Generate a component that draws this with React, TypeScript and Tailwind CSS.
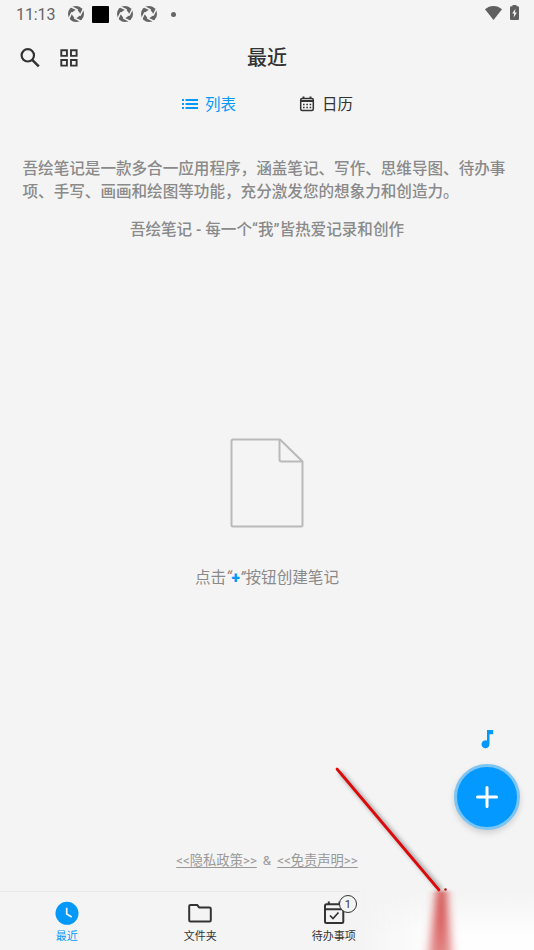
import type { ReactNode } from "react";

const ApertureIcon = () => (
    <svg className="w-4 h-4" viewBox="0 0 16 16">
        <circle cx="8" cy="8" r="8" fill="#636363" />
        <path d="M8.800 3 13 8.800 7.200 13 3 7.200Z" fill="#f4f4f4" />
        <path
            d="M9 3.600 4 1.200M12.400 9 14.800 4M7 12.400 12 14.800M3.600 7 1.200 12"
            stroke="#f4f4f4"
            strokeWidth="1.500"
            strokeLinecap="square"
            fill="none"
        />
    </svg>
);

function StatusBar() {
    return (
        <div className="h-7 shrink-0 flex items-center pl-4 pr-[15px] text-[#666]">
            <span className="w-[52px] pt-px text-base leading-4 tracking-[-0.1px]">11:13</span>
            <div className="flex items-center pt-px -mt-px">
                <ApertureIcon />
                <div className="ml-2 mr-2 w-[17px] h-[17px] rounded-[1px] bg-black" />
                <ApertureIcon />
                <div className="w-2" />
                <ApertureIcon />
                <div className="ml-[14px] w-[5px] h-[5px] rounded-full bg-[#666]" />
            </div>
            <div className="ml-auto -mt-[3px] flex items-center gap-2">
                <svg className="w-[17px] h-[14px]" viewBox="0 0 17 14" fill="#5f5f5f">
                    <path d="M8.500 14 0 3.300C2.400 1.200 5.300 0 8.500 0S14.600 1.200 17 3.300Z" />
                </svg>
                <svg className="w-[9px] h-[15px]" viewBox="0 0 9 15">
                    <path d="M2.500 1.300V0h4v1.300h1.300Q9 1.300 9 2.500V14q0 1-1 1H1q-1 0-1-1V2.500q0-1.200 1.200-1.200Z" fill="#5f5f5f" />
                    <path d="M5.400 3.800 2.200 8.500h1.900L3.700 12.500 6.900 7.600H4.900Z" fill="#f4f4f4" />
                </svg>
            </div>
        </div>
    );
}

function Header() {
    return (
        <header className="h-[59px] shrink-0 grid grid-cols-3 items-center px-[18px] text-[#333]">
            <div className="flex items-center gap-[15px]">
                <svg className="w-6 h-6" viewBox="0 0 24 24" fill="none" stroke="currentColor" strokeWidth="2.200">
                    <circle cx="9.800" cy="9.300" r="6.200" />
                    <path d="m14.200 13.800 6.600 6.600" strokeWidth="2.500" />
                </svg>
                <svg className="w-6 h-6" viewBox="0 0 24 24" fill="none" stroke="currentColor" strokeWidth="1.900">
                    <path d="M4.300 4.300h5.600v5.600H4.300zM14 4.300h5.600v5.600H14zM4.300 14h5.600v5.600H4.300zM14 14h5.600v5.600H14z" />
                </svg>
            </div>
            <h1 className="pt-px text-center text-[20px] font-medium leading-none">最近</h1>
        </header>
    );
}

function ViewTabs() {
    return (
        <div className="h-9 shrink-0 flex items-center justify-center gap-[63px] pl-px text-[15.500px] text-[#333]">
            <button className="flex items-center gap-[7px] text-[#0499f8]">
                <svg className="w-4 h-4 -mt-0.5" viewBox="0 0 16 16" fill="currentColor">
                    <path d="M0 3h2v2H0zM3.500 3H16v2H3.500zM0 7h2v2H0zM3.500 7H16v2H3.500zM0 11h2v2H0zM3.500 11H16v2H3.500z" />
                </svg>
                <span className="pt-0.5">列表</span>
            </button>
            <button className="flex items-center gap-[7px]">
                <svg className="w-4 h-4 -mt-0.5" viewBox="0 0 16 16" fill="none" stroke="currentColor">
                    <rect x="1.700" y="2.500" width="12.600" height="12" rx="1.500" strokeWidth="1.500" />
                    <path d="M2 5h12M4.500.5v2.500M11.500.5v2.500" strokeWidth="1.900" />
                    <path d="M4 8.500h8.500M4 11.500h8.500" strokeWidth="1.600" strokeDasharray="1.600 1.700" />
                </svg>
                <span className="pt-0.5">日历</span>
            </button>
        </div>
    );
}

function EmptyNotes() {
    return (
        <div className="flex flex-col items-center">
            <svg className="w-[74px] h-[90px]" viewBox="0 0 74 90" fill="none" stroke="#b9b9b9" strokeWidth="2" strokeLinejoin="round">
                <path d="M50 1.500H3Q1.500 1.500 1.500 3V87q0 1.500 1.500 1.500h68q1.500 0 1.500-1.500V23.500Z" />
                <path d="M49.500 1.500V21.500q0 2 2 2h21" />
            </svg>
            <p className="mt-[38px] text-[15.600px] leading-6 text-[#8a8a8a]">
                点击<span className="italic text-[#a47f72]">“</span>
                <span className="font-black text-[#0499f8]">+</span>
                <span className="italic">”</span>按钮创建笔记
            </p>
        </div>
    );
}

function NavItem({ label, active, children }: { label: string; active?: boolean; children: ReactNode }) {
    return (
        <button className={`w-[133.500px] flex flex-col items-center pt-2 ${active ? "text-[#0499f8]" : "text-[#333]"}`}>
            {children}
            <span className="mt-[3px] text-[11px] leading-4">{label}</span>
        </button>
    );
}

function BottomNav() {
    return (
        <nav className="relative h-[59px] shrink-0 flex border-t border-[#e9e9e9]">
            <NavItem label="最近" active>
                <svg className="w-[26px] h-[26px]" viewBox="0 0 26 26" fill="none">
                    <circle cx="13" cy="13.300" r="11.500" fill="currentColor" />
                    <path d="M12.700 7.800v6.300l5 3" stroke="#f4f4f4" strokeWidth="1.700" />
                </svg>
            </NavItem>
            <NavItem label="文件夹">
                <svg className="w-[26px] h-[26px]" viewBox="0 0 26 26" fill="none" stroke="currentColor" strokeWidth="2">
                    <path d="M3.500 5h6.700l2 2.400h10.300q1.300 0 1.300 1.300v11.500q0 1.300-1.300 1.300h-19q-1.300 0-1.300-1.300V6.300Q2.200 5 3.500 5Z" />
                </svg>
            </NavItem>
            <NavItem label="待办事项">
                <div className="relative">
                    <svg className="w-[26px] h-[26px]" viewBox="0 0 26 26" fill="none" stroke="currentColor" strokeWidth="2">
                        <rect x="4" y="4.300" width="18.300" height="18.600" rx="1.500" />
                        <path d="M4 9.300h18M7.800 1.500v3M18.500 1.500v3" />
                        <path d="m9 15.500 3 3 5.500-6" strokeWidth="1.700" />
                    </svg>
                    <span className="absolute left-[18px] -top-[5px] w-[18px] h-[18px] rounded-full border border-[#333] bg-[#f4f4f4] flex items-center justify-center text-[11px] leading-none">
                        1
                    </span>
                </div>
            </NavItem>
            {/* Washed-out corner of the bar */}
            <div className="absolute left-[360px] right-0 -top-px h-1 bg-[#f4f4f4]" />
            <div className="absolute left-[358px] right-0 top-0 bottom-0 bg-linear-to-b from-[#f4f4f4] to-[#fefefe] to-75% [mask-image:linear-gradient(to_right,transparent,black_45%)]" />
        </nav>
    );
}

// Red pointer drawn over the page, fading out below the nav edge
function Pointer() {
    return (
        <svg className="absolute left-[320px] top-[750px] w-[214px] h-[200px] pointer-events-none" viewBox="0 0 214 200">
            <defs>
                <filter id="shadow" x="-20%" y="-20%" width="140%" height="140%">
                    <feGaussianBlur stdDeviation="2.200" />
                </filter>
                <filter id="smear" x="-100%" y="-10%" width="300%" height="120%">
                    <feGaussianBlur stdDeviation="5 1.500" />
                </filter>
                <linearGradient id="fade" x1="0" y1="0" x2="0" y2="1">
                    <stop offset="0" stopColor="#cf3a3a" />
                    <stop offset=".5" stopColor="#d95c5c" stopOpacity=".95" />
                    <stop offset="1" stopColor="#df7c7c" stopOpacity=".85" />
                </linearGradient>
            </defs>
            <path d="m20 22 101 118" stroke="#444" strokeWidth="4" opacity=".5" filter="url(#shadow)" />
            <path d="M117 141h9l6 70h-24Z" fill="url(#fade)" filter="url(#smear)" />
            <path d="m17 19 102 121" stroke="#dc0b0b" strokeWidth="2.800" strokeLinecap="round" />
            <circle cx="125.500" cy="139.500" r="1.300" fill="#a52020" />
        </svg>
    );
}

export default function App() {
    return (
        <div className="relative w-[534px] h-[950px] flex flex-col overflow-hidden bg-[#f4f4f4] font-[Roboto,'Noto_Sans_CJK_SC',sans-serif]">
            <StatusBar />
            <Header />
            <ViewTabs />

            <main className="relative flex-1 flex flex-col pt-[35px]">
                <section className="pl-[22.500px] text-[15.580px] leading-[23px] font-medium text-[#8a8a8a]">
                    <p className="whitespace-nowrap">
                        吾绘笔记是一款多合一应用程序，涵盖笔记、写作、思维导图、待办事
                        <br />
                        项、手写、画画和绘图等功能，充分激发您的想象力和创造力。
                    </p>
                    <p className="mt-[15px] pr-[22.500px] text-center">吾绘笔记 - 每一个“我”皆热爱记录和创作</p>
                </section>

                <div className="mt-[196px]">
                    <EmptyNotes />
                </div>

                <p className="mt-auto mb-5 flex justify-center gap-[6px] text-[13.300px] leading-5 text-[#999]">
                    <a className="underline underline-offset-2">&lt;&lt;隐私政策&gt;&gt;</a>
                    <span>&amp;</span>
                    <a className="underline underline-offset-2">&lt;&lt;免责声明&gt;&gt;</a>
                </p>

                {/* Floating actions */}
                <div className="absolute right-[14px] bottom-[61px] flex flex-col items-center gap-[15px]">
                    <svg className="w-5 h-5" viewBox="0 0 20 20" fill="#0499f8">
                        <path d="M10 1h6.200v4.200h-3.700v9.900A4 4 0 1 1 10 11.500Z" />
                    </svg>
                    <button className="w-[66px] h-[66px] rounded-full border-[3px] border-[#7cc5f3] bg-[#0499ff] shadow-[0_3px_6px_rgba(0,0,0,0.15)] flex items-center justify-center">
                        <svg className="w-6 h-6" viewBox="0 0 24 24" stroke="#fff" strokeWidth="3" strokeLinecap="round">
                            <path d="M12 2.500v19M2.500 12h19" />
                        </svg>
                    </button>
                </div>
            </main>

            <BottomNav />
            <Pointer />
        </div>
    );
}
